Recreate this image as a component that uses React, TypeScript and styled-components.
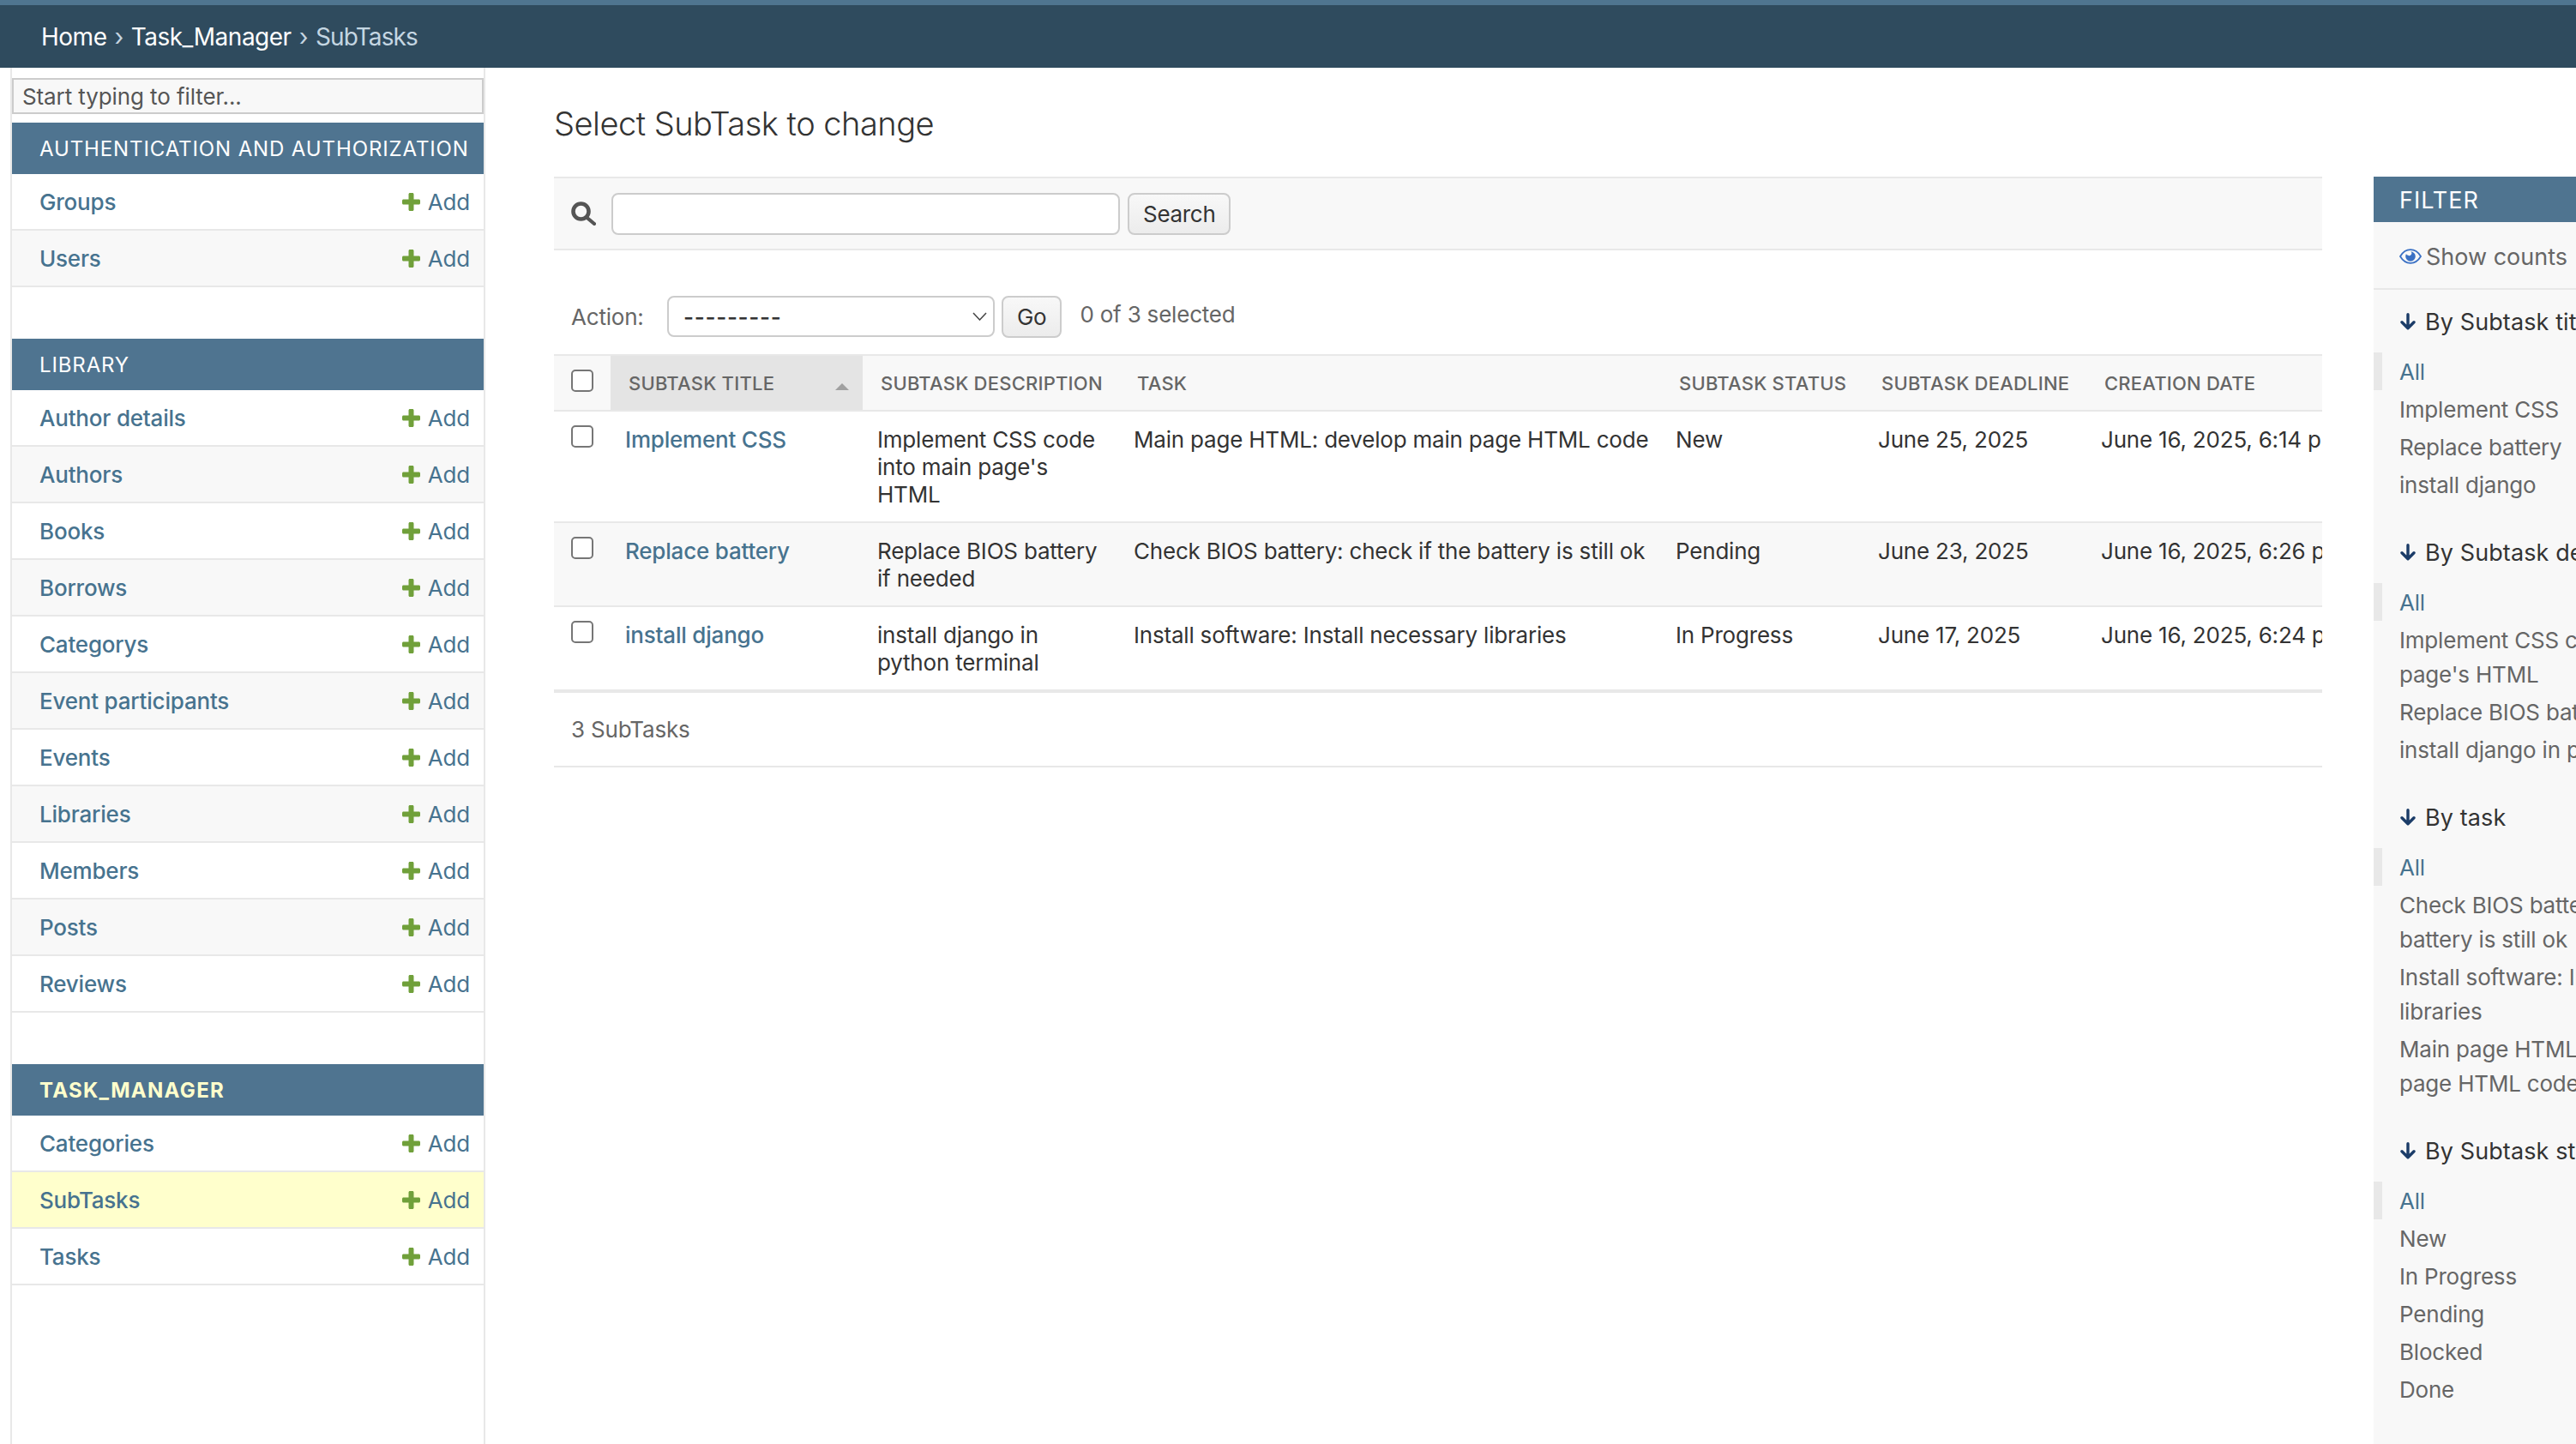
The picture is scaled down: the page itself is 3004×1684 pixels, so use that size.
import styled, { createGlobalStyle } from "styled-components";

const GlobalStyle = createGlobalStyle`
  html, body {
    margin: 0;
    padding: 0;
    background: #fff;
    overflow: hidden;
  }
  * {
    box-sizing: border-box;
  }
  body {
    font-family: Inter, "Liberation Sans", sans-serif;
    color: #333;
    letter-spacing: -0.2px;
  }
`;

const sections = [
  { title: "Authentication and Authorization", models: ["Groups", "Users"] },
  {
    title: "Library",
    models: [
      "Author details",
      "Authors",
      "Books",
      "Borrows",
      "Categorys",
      "Event participants",
      "Events",
      "Libraries",
      "Members",
      "Posts",
      "Reviews",
    ],
  },
  { title: "Task_Manager", models: ["Categories", "SubTasks", "Tasks"], current: true },
];

const columns = [
  { label: "Subtask title", width: 294, sorted: true },
  { label: "Subtask description", width: 299 },
  { label: "Task", width: 632 },
  { label: "Subtask status", width: 236 },
  { label: "Subtask deadline", width: 260 },
  { label: "Creation date", width: 420 },
];

const rows = [
  {
    title: "Implement CSS",
    description: "Implement CSS code into main page's HTML",
    task: "Main page HTML: develop main page HTML code",
    status: "New",
    deadline: "June 25, 2025",
    created: "June 16, 2025, 6:14 p.m.",
  },
  {
    title: "Replace battery",
    description: "Replace BIOS battery if needed",
    task: "Check BIOS battery: check if the battery is still ok",
    status: "Pending",
    deadline: "June 23, 2025",
    created: "June 16, 2025, 6:26 p.m.",
  },
  {
    title: "install django",
    description: "install django in python terminal",
    task: "Install software: Install necessary libraries",
    status: "In Progress",
    deadline: "June 17, 2025",
    created: "June 16, 2025, 6:24 p.m.",
  },
];

const filters = [
  { title: "By Subtask title", items: ["Implement CSS", "Replace battery", "install django"] },
  {
    title: "By Subtask description",
    items: [
      "Implement CSS code into main page's HTML",
      "Replace BIOS battery if needed",
      "install django in python terminal",
    ],
  },
  {
    title: "By task",
    items: [
      "Check BIOS battery: check if the battery is still ok",
      "Install software: Install necessary libraries",
      "Main page HTML: develop main page HTML code",
    ],
  },
  {
    title: "By Subtask status",
    items: ["New", "In Progress", "Pending", "Blocked", "Done"],
  },
];

function PlusIcon() {
  return (
    <PlusSvg viewBox="0 0 21 21">
      <path
        d="M7.500 1.500C7.500.7 8.200 0 9 0h3c.8 0 1.500.7 1.500 1.500v6h6c.8 0 1.500.7 1.500 1.500v3c0 .8-.7 1.500-1.500 1.500h-6v6c0 .8-.7 1.500-1.500 1.500H9c-.8 0-1.500-.7-1.500-1.500v-6h-6C.7 13.500 0 12.800 0 12V9c0-.8.7-1.500 1.500-1.500h6z"
        fill="#70a03a"
      />
    </PlusSvg>
  );
}

function ArrowIcon() {
  return (
    <ArrowSvg viewBox="0 0 18 20">
      <path
        d="M9 1.800V17.500M2 10.800 9 17.800l7-7"
        fill="none"
        stroke="#1b3c68"
        strokeWidth="3.400"
        strokeLinecap="round"
        strokeLinejoin="round"
      />
    </ArrowSvg>
  );
}

function SearchIcon() {
  return (
    <SearchSvg viewBox="0 0 29 28">
      <circle cx="11.500" cy="11.500" r="9" fill="none" stroke="#555" strokeWidth="4.600" />
      <path d="M18 18.500 27 26" fill="none" stroke="#555" strokeWidth="4.200" strokeLinecap="round" />
    </SearchSvg>
  );
}

function EyeIcon() {
  return (
    <EyeSvg viewBox="0 0 26 18">
      <path
        d="M1 9C4 4 8.200 1.200 13 1.200S22 4 25 9c-3 5-7.200 7.800-12 7.800S4 14 1 9z"
        fill="none"
        stroke="#3a70c4"
        strokeWidth="1.800"
      />
      <path
        d="M13 3.200a5.800 5.800 0 1 1-5.800 5.800c0-1.100.3-2.100.8-3 .3 1 1.200 1.700 2.300 1.700a2.400 2.400 0 0 0 2.700-4.500z"
        fill="#3a70c4"
      />
    </EyeSvg>
  );
}

export default function App() {
  return (
    <Page>
      <GlobalStyle />
      <Header>
        <CrumbLink>Home</CrumbLink>
        <CrumbSep>›</CrumbSep>
        <CrumbLink>Task_Manager</CrumbLink>
        <CrumbSep>›</CrumbSep>
        <CrumbCurrent>SubTasks</CrumbCurrent>
      </Header>
      <Body>
        <Sidebar>
          <NavFilter placeholder="Start typing to filter..." />
          {sections.map((section) => (
            <Section key={section.title}>
              <SectionTitle $current={section.current}>{section.title}</SectionTitle>
              {section.models.map((model, i) => (
                <ModelRow key={model} $alt={i % 2 === 1} $current={model === "SubTasks"}>
                  <span>{model}</span>
                  <AddLink>
                    <PlusIcon />
                    Add
                  </AddLink>
                </ModelRow>
              ))}
            </Section>
          ))}
        </Sidebar>
        <Main>
          <Title>Select SubTask to change</Title>
          <Content>
            <ChangeList>
              <Toolbar>
                <SearchIcon />
                <SearchInput />
                <Button>Search</Button>
              </Toolbar>
              <Actions>
                <ActionLabel>Action:</ActionLabel>
                <SelectBox>
                  <Dashes>---------</Dashes>
                  <svg width="17" height="10" viewBox="0 0 17 10">
                    <path d="M1 1 8.500 9 16 1" fill="none" stroke="#444" strokeWidth="1.500" />
                  </svg>
                </SelectBox>
                <Button>Go</Button>
                <Counter>0 of 3 selected</Counter>
              </Actions>
              <TableScroll>
                <Table>
                  <colgroup>
                    <col width={66} />
                    {columns.map((c) => (
                      <col key={c.label} width={c.width} />
                    ))}
                  </colgroup>
                  <thead>
                    <tr>
                      <CheckHead>
                        <Check type="checkbox" />
                      </CheckHead>
                      {columns.map((c) => (
                        <Th key={c.label} $sorted={c.sorted}>
                          {c.label}
                          {c.sorted && <SortArrow />}
                        </Th>
                      ))}
                    </tr>
                  </thead>
                  <tbody>
                    {rows.map((row, i) => (
                      <Tr key={row.title} $alt={i % 2 === 1}>
                        <CheckCell>
                          <Check type="checkbox" />
                        </CheckCell>
                        <TitleCell>{row.title}</TitleCell>
                        <Td>{row.description}</Td>
                        <Td>{row.task}</Td>
                        <Td>{row.status}</Td>
                        <Td>{row.deadline}</Td>
                        <Td>{row.created}</Td>
                      </Tr>
                    ))}
                  </tbody>
                </Table>
              </TableScroll>
              <Paginator>3 SubTasks</Paginator>
            </ChangeList>
            <FilterPanel>
              <FilterTitle>Filter</FilterTitle>
              <ShowCounts>
                <EyeIcon />
                Show counts
              </ShowCounts>
              {filters.map((group) => (
                <FilterGroup key={group.title}>
                  <FilterHeading>
                    <ArrowIcon />
                    {group.title}
                  </FilterHeading>
                  <FilterList>
                    <FilterItem $selected>All</FilterItem>
                    {group.items.map((item) => (
                      <FilterItem key={item}>{item}</FilterItem>
                    ))}
                  </FilterList>
                </FilterGroup>
              ))}
            </FilterPanel>
          </Content>
        </Main>
      </Body>
    </Page>
  );
}

const Page = styled.div`
  width: 3004px;
  height: 1684px;
  overflow: hidden;
  display: flex;
  flex-direction: column;
`;

const Header = styled.div`
  height: 79px;
  flex: none;
  display: flex;
  align-items: center;
  gap: 9px;
  padding: 0 0 0 48px;
  background: #2f4b5e;
  border-top: 6px solid #4f7590;
  font-size: 28px;
  color: #fff;
  letter-spacing: -0.5px;
`;

const CrumbLink = styled.span`
  color: #fff;
`;

const CrumbSep = styled.span`
  color: #c5d5e0;
`;

const CrumbCurrent = styled.span`
  color: #c4d6e2;
  letter-spacing: -0.9px;
`;

const Body = styled.div`
  flex: 1;
  display: flex;
  min-height: 0;
`;

const Sidebar = styled.div`
  flex: none;
  width: 554px;
  margin-left: 12px;
  padding-top: 12px;
  border-left: 2px solid #e8e8e8;
  border-right: 2px solid #e8e8e8;
`;

const NavFilter = styled.input`
  display: block;
  width: 100%;
  height: 42px;
  padding: 0 10px;
  margin-bottom: 10px;
  border: 2px solid #ccc;
  background: #f8f8f8;
  font-family: inherit;
  font-size: 26px;
  letter-spacing: -0.1px;
  outline: none;

  &::placeholder {
    color: #555;
    opacity: 1;
  }
`;

const Section = styled.div`
  margin-bottom: 60px;
`;

const SectionTitle = styled.div<{ $current?: boolean }>`
  height: 60px;
  display: flex;
  align-items: center;
  padding-left: 32px;
  background: #4f7490;
  color: ${(p) => (p.$current ? "#ffffcc" : "#fff")};
  font-size: 24px;
  font-weight: ${(p) => (p.$current ? 700 : 400)};
  text-transform: uppercase;
  letter-spacing: ${(p) => (p.$current ? "1.3px" : "0.88px")};
  white-space: nowrap;
`;

const ModelRow = styled.div<{ $alt: boolean; $current: boolean }>`
  height: 66px;
  display: flex;
  align-items: center;
  justify-content: space-between;
  padding: 0 16px 0 32px;
  border-bottom: 2px solid #e8e8e8;
  background: ${(p) => (p.$current ? "#ffffcc" : p.$alt ? "#f8f8f8" : "#fff")};
  color: #47738f;
  font-size: 26px;
  font-weight: 500;
`;

const AddLink = styled.span`
  display: flex;
  align-items: center;
  gap: 9px;
  font-weight: 400;
`;

const PlusSvg = styled.svg`
  width: 21px;
  height: 21px;
`;

const Main = styled.div`
  flex: 1;
  min-width: 0;
  padding: 40px 0 0 80px;
`;

const Title = styled.h1`
  margin: 0 0 37px;
  height: 50px;
  font-size: 38px;
  line-height: 50px;
  font-weight: 300;
  letter-spacing: -0.5px;
  color: #333;
`;

const Content = styled.div`
  display: flex;
  gap: 60px;
`;

const ChangeList = styled.div`
  flex: none;
  width: 2062px;
`;

const Toolbar = styled.div`
  height: 86px;
  display: flex;
  align-items: center;
  padding-left: 20px;
  background: #f8f8f8;
  border-top: 2px solid #e8e8e8;
  border-bottom: 2px solid #e8e8e8;
`;

const SearchSvg = styled.svg`
  width: 29px;
  height: 28px;
  margin-right: 18px;
`;

const SearchInput = styled.input`
  width: 593px;
  height: 49px;
  margin-right: 9px;
  background: #fff;
  border: 2px solid #ccc;
  border-radius: 8px;
  outline: none;
`;

const Button = styled.button`
  height: 49px;
  padding: 0 16px;
  border: 2px solid #ccc;
  border-radius: 8px;
  background: linear-gradient(#f8f8f8, #ececec);
  color: #333;
  font-family: inherit;
  font-size: 26px;
  letter-spacing: -0.3px;
`;

const Actions = styled.div`
  display: flex;
  align-items: center;
  margin: 53px 0 20px;
  padding-left: 20px;
  height: 48px;
`;

const ActionLabel = styled.span`
  width: 112px;
  font-size: 26px;
  color: #666;
`;

const SelectBox = styled.div`
  width: 382px;
  height: 48px;
  margin-right: 8px;
  display: flex;
  align-items: center;
  justify-content: space-between;
  padding: 0 7px 0 17px;
  background: #fff;
  border: 2px solid #ccc;
  border-radius: 8px;
  font-size: 26px;
  color: #333;
`;

const Dashes = styled.span`
  letter-spacing: 0.7px;
  font-weight: 500;
`;

const Counter = styled.span`
  margin: -6px 0 0 21px;
  font-size: 26px;
  color: #666;
`;

const TableScroll = styled.div`
  overflow: hidden;
`;

const Table = styled.table`
  table-layout: fixed;
  width: 2207px;
  border-collapse: separate;
  border-spacing: 0;
  border-bottom: 2px solid #e8e8e8;
`;

const CheckHead = styled.th`
  padding: 16px 0 0 20px;
  height: 67px;
  text-align: left;
  vertical-align: top;
  background: #f8f8f8;
  border-top: 2px solid #e8e8e8;
  border-bottom: 2px solid #e8e8e8;
`;

const Th = styled.th<{ $sorted?: boolean }>`
  position: relative;
  padding: 0 0 0 21px;
  height: 67px;
  text-align: left;
  background: ${(p) => (p.$sorted ? "#e4e4e4" : "#f8f8f8")};
  border-top: 2px solid #e8e8e8;
  border-bottom: 2px solid #e8e8e8;
  color: #666;
  font-size: 22px;
  font-weight: 500;
  text-transform: uppercase;
  letter-spacing: 0.22px;
  white-space: nowrap;
`;

const SortArrow = styled.span`
  position: absolute;
  left: 262px;
  top: 32px;
  width: 0;
  height: 0;
  border-left: 8px solid transparent;
  border-right: 8px solid transparent;
  border-bottom: 8px solid #a0a0a0;
`;

const Tr = styled.tr<{ $alt: boolean }>`
  background: ${(p) => (p.$alt ? "#f8f8f8" : "#fff")};
`;

const Td = styled.td`
  padding: 17px 8px 15px 17px;
  vertical-align: top;
  border-bottom: 2px solid #e8e8e8;
  font-size: 26px;
  line-height: 32px;
  color: #333;
`;

const CheckCell = styled(Td)`
  padding: 16px 0 0 20px;
`;

const TitleCell = styled(Td)`
  color: #47738f;
  font-weight: 500;
`;

const Check = styled.input`
  appearance: none;
  display: block;
  width: 26px;
  height: 26px;
  margin: 0;
  background: #fff;
  border: 2px solid #767676;
  border-radius: 5px;
`;

const Paginator = styled.div`
  height: 87px;
  display: flex;
  align-items: center;
  padding-left: 20px;
  border-bottom: 2px solid #e8e8e8;
  font-size: 26px;
  color: #666;
`;

const FilterPanel = styled.div`
  flex: none;
  width: 470px;
  height: 1500px;
  background: #f8f8f8;
`;

const FilterTitle = styled.div`
  height: 53px;
  display: flex;
  align-items: center;
  padding: 2px 0 0 30px;
  background: #4f7490;
  color: #fff;
  font-size: 27px;
  font-weight: 400;
  text-transform: uppercase;
  letter-spacing: 1px;
`;

const ShowCounts = styled.div`
  height: 79px;
  display: flex;
  align-items: center;
  gap: 5px;
  padding: 3px 0 0 30px;
  border-bottom: 2px solid #e8e8e8;
  font-size: 27px;
  letter-spacing: 0;
  color: #666;
`;

const EyeSvg = styled.svg`
  width: 26px;
  height: 18px;
`;

const FilterGroup = styled.div`
  padding-top: 17px;
  margin-bottom: 20px;
`;

const FilterHeading = styled.h3`
  display: flex;
  align-items: center;
  gap: 11px;
  margin: 0 0 16px;
  padding-left: 31px;
  height: 40px;
  font-size: 27px;
  font-weight: 400;
  letter-spacing: 0.1px;
  color: #333;
  white-space: nowrap;
`;

const ArrowSvg = styled.svg`
  width: 18px;
  height: 20px;
`;

const FilterList = styled.ul`
  margin: 0;
  padding: 0;
  list-style: none;
`;

const FilterItem = styled.li<{ $selected?: boolean }>`
  padding: 3px 20px 1px 30px;
  font-size: 26px;
  line-height: 40px;
  color: ${(p) => (p.$selected ? "#47738f" : "#666")};
  box-shadow: ${(p) => (p.$selected ? "inset 10px 0 0 #e8e8e8" : "none")};
`;
